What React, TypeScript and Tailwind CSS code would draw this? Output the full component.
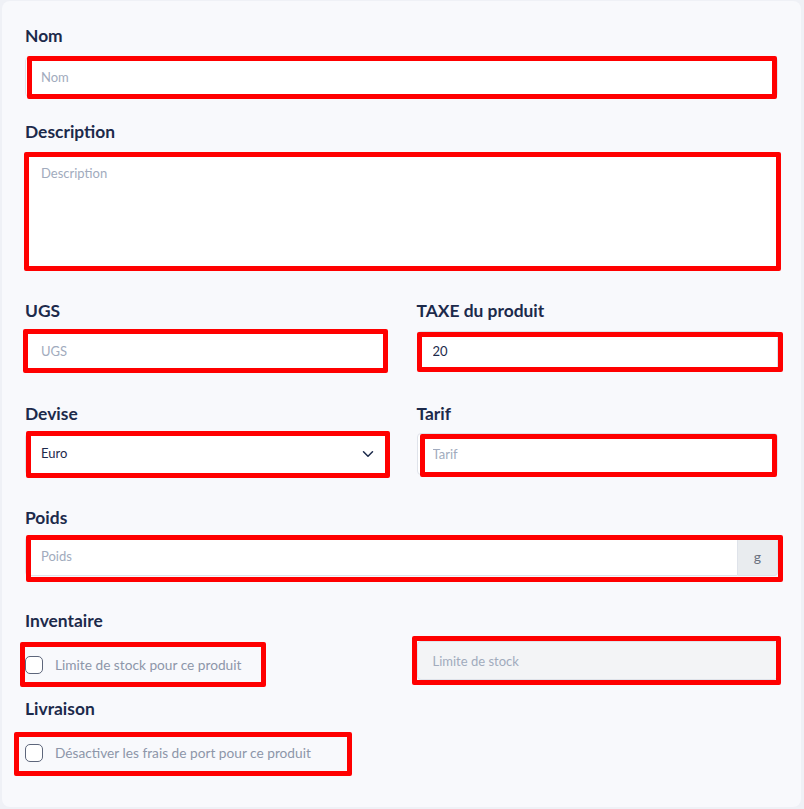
import type { ReactNode } from 'react';
import { ChevronDown } from 'lucide-react';

// red annotation frame drawn over a field
function Mark({ box }: { box: string }) {
  return <span className={`pointer-events-none absolute rounded-[2px] border-[5px] border-[#ff0000] ${box}`} />;
}

function Label({ children, className = '' }: { children: ReactNode; className?: string }) {
  return <div className={`h-6 text-[17.4px] font-bold leading-6 text-[#1c2a4b] ${className}`}>{children}</div>;
}

const baseCls =
  'w-full rounded-[4px] border border-[#dfe3ea] px-[15px] text-[13px] text-[#1c2a4b] outline-none placeholder:text-[#a1abbd]';
const inputCls = `${baseCls} bg-white`;

function Check({ text, box }: { text: string; box: string }) {
  return (
    <div className="relative flex h-[18px] items-center">
      <span className="h-[18px] w-[18px] shrink-0 rounded-[5px] border-[1.5px] border-[#5d667b] bg-white" />
      <span className="ml-3 text-[13.7px] text-[#8d96a9]">{text}</span>
      <Mark box={box} />
    </div>
  );
}

export default function App() {
  return (
    <div className="flex h-[809px] w-[804px] bg-[#eff1f6] pb-[2px] pl-[2px] pr-[3px] pt-[1px] font-['Lato',sans-serif]">
      <div className="flex-1 rounded-lg bg-[#f8f9fc] px-[23px] pt-[23px]">
        <Label>Nom</Label>
        <div className="relative mt-[9px]">
          <input className={`${inputCls} h-10`} placeholder="Nom" />
          <Mark box="left-[2px] right-[1px] -top-px -bottom-[2px]" />
        </div>

        <Label className="mt-[23px]">Description</Label>
        <div className="relative mt-[9px]">
          <textarea className={`${inputCls} block h-[116px] resize-none py-[10px]`} placeholder="Description" />
          <Mark box="-left-px -right-[3px] -top-px -bottom-[2px]" />
        </div>

        <div className="mt-[30px] grid grid-cols-2 gap-x-[30px]">
          <div>
            <Label>UGS</Label>
            <div className="relative mt-[8px]">
              <input className={`${inputCls} h-10`} placeholder="UGS" />
              <Mark box="-left-[2px] -right-px -top-[2px] -bottom-[2px]" />
            </div>
          </div>
          <div>
            <Label>TAXE du produit</Label>
            <div className="relative mt-[8px]">
              <input className={`${inputCls} h-10 px-[12px]`} defaultValue="20" />
              <Mark box="left-0 -right-[5px] top-px -bottom-px" />
            </div>
          </div>
        </div>

        <div className="mt-[31px] grid grid-cols-2 gap-x-[30px]">
          <div>
            <Label>Devise</Label>
            <div className="relative mt-[7px]">
              <div className={`${inputCls} flex h-[42px] items-center justify-between pr-[9px]`}>
                <span>Euro</span>
                <ChevronDown size={18} strokeWidth={2} className="text-[#1c2a4b]" />
              </div>
              <Mark box="left-px -right-[3px] -top-[2px] -bottom-[3px]" />
            </div>
          </div>
          <div>
            <Label>Tarif</Label>
            <div className="relative mt-[7px]">
              <input className={`${inputCls} h-[42px]`} placeholder="Tarif" />
              <Mark box="left-[3px] right-px top-px -bottom-[2px]" />
            </div>
          </div>
        </div>

        <Label className="mt-[31px]">Poids</Label>
        <div className="relative mt-[6px] flex h-10">
          <input className={`${inputCls} h-10 flex-1 rounded-r-none`} placeholder="Poids" />
          <span className="flex w-[40px] items-center justify-center rounded-r-[4px] border border-l-0 border-[#dfe3ea] bg-[#e9ecef] text-[14px] text-[#6b7280]">
            g
          </span>
          <Mark box="left-px -right-[5px] -top-px -bottom-[6px]" />
        </div>

        <Label className="mt-[33px]">Inventaire</Label>
        <div className="mt-[8px] grid grid-cols-2 gap-x-[30px]">
          <div className="pt-[15px]">
            <Check text="Limite de stock pour ce produit" box="-left-[5px] -top-[14px] h-[45px] w-[246px]" />
          </div>
          <div className="relative">
            <input
              disabled
              className={`${baseCls} h-[39px] bg-[#f3f4f6] text-[13.5px]`}
              placeholder="Limite de stock"
            />
            <Mark box="-left-[5px] -right-[3px] -top-[5px] -bottom-[5px]" />
          </div>
        </div>

        <Label className="mt-[17px]">Livraison</Label>
        <div className="mt-[23px]">
          <Check text="Désactiver les frais de port pour ce produit" box="-left-[11px] -top-[12px] h-[44px] w-[338px]" />
        </div>
      </div>
    </div>
  );
}
